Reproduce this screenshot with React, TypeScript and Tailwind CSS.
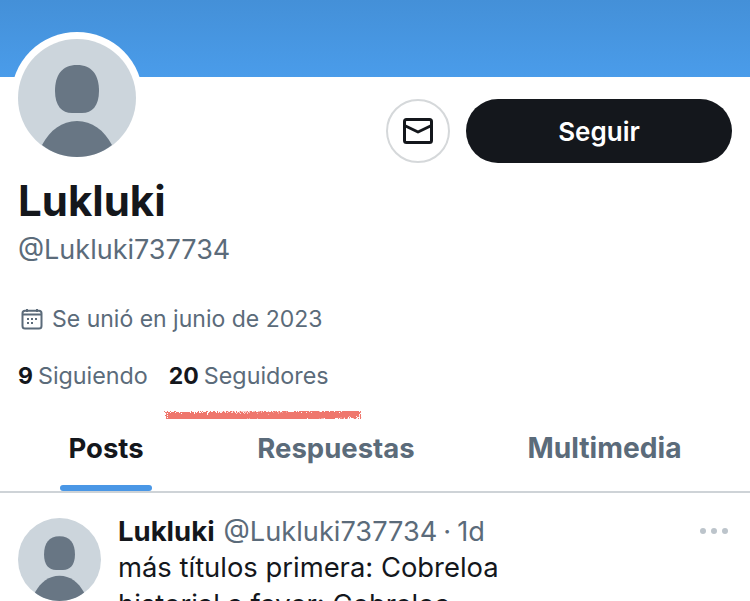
const DefaultAvatar = ({ className }: { className: string }) => (
  <svg viewBox="0 0 118 118" className={className}>
    <circle cx="59" cy="59" r="59" fill="#ccd5dc" />
    <path d="M59 26c15 0 22 10 22 26 0 15-7 22-17 22H54c-10 0-17-7-17-22 0-16 7-26 22-26z" fill="#687684" />
    <path d="M24 106c8-15 20-24 35-24s27 9 35 24C84 114 72 118 59 118S34 114 24 106z" fill="#687684" />
  </svg>
)

const MailIcon = () => (
  <svg viewBox="0 0 30 26" className="w-[30px] h-[26px]" fill="none" stroke="#14171c" strokeWidth="3" strokeLinejoin="round">
    <rect x="1.5" y="1.5" width="27" height="23" rx="2" />
    <path d="M1.5 7.5l13.5 6.5 13.5-6.5" />
  </svg>
)

const CalendarIcon = () => (
  <svg viewBox="0 0 22 22" className="w-[22px] h-[22px]" fill="none" stroke="#5b6b7a" strokeWidth="2">
    <rect x="1.5" y="2.8" width="19" height="17.7" rx="2.5" />
    <path d="M1.5 6.5h19M6 1v3M16 1v3" />
    <path d="M6 11h2M10 11h2M14 11h2M6 15h2M10 15h2" strokeWidth="2" />
  </svg>
)

const Scribble = () => (
  <svg viewBox="0 0 200 20" className="w-[200px] h-5 ml-[163px] mt-[14px]">
    <defs>
      <filter id="rough" x="-5%" y="-50%" width="110%" height="200%">
        <feTurbulence type="fractalNoise" baseFrequency="1.1" numOctaves="3" seed="4" />
        <feDisplacementMap in="SourceGraphic" scale="8" />
      </filter>
    </defs>
    <path d="M3 10.5C40 11 70 10 100 10S170 9 197 7.5" stroke="#ec5f54" strokeOpacity="0.85" strokeWidth="9" fill="none" filter="url(#rough)" />
  </svg>
)

const Stat = ({ value, label }: { value: string; label: string }) => (
  <div className="flex gap-[5px]">
    <b className="font-bold text-[23px] text-[#14171c]">{value}</b>
    <span>{label}</span>
  </div>
)

export default function App() {
  return (
    <div className="w-[750px] h-[601px] overflow-hidden bg-white text-[#14171c] font-['Inter',sans-serif]">
      <div className="h-[77px] bg-gradient-to-b from-[#4490d8] to-[#4a9cea]" />

      <div className="flex items-end justify-between -mt-[45px] pl-[11px] pr-[18px]">
        <div className="w-[132px] h-[132px] rounded-full bg-white p-[7px]">
          <DefaultAvatar className="w-[118px] h-[118px]" />
        </div>
        <div className="flex gap-4 mb-px">
          <div className="w-16 h-16 rounded-full border-2 border-[#d5d8da] flex items-center justify-center">
            <MailIcon />
          </div>
          <div className="w-[266px] h-16 rounded-full bg-[#14171c] flex items-center justify-center text-white text-[26px] font-semibold">
            Seguir
          </div>
        </div>
      </div>

      <div className="px-[18px]">
        <div className="mt-[13px] text-[42px] leading-[48px] font-bold">Lukluki</div>
        <div className="mt-[9px] text-[27px] leading-[32px] text-[#5b6b7a]">@Lukluki737734</div>
        <div className="mt-[37px] h-8 flex items-center text-[23px] text-[#5b6b7a]">
          <span className="ml-[3px] mr-[9px]"><CalendarIcon /></span>
          Se unió en junio de 2023
        </div>
        <div className="mt-[25px] flex gap-[21px] text-[23.3px] leading-8 text-[#5b6b7a]">
          <Stat value="9" label="Siguiendo" />
          <Stat value="20" label="Seguidores" />
        </div>
      </div>

      <Scribble />

      <div className="mt-[4px] h-[63px] border-b-2 border-[#ced3d7] flex text-[27.5px] font-bold text-[#5b6b7a]">
        <div className="w-[212px] flex flex-col items-center text-[#14171c]">
          <div className="h-[50px] leading-[37px]">Posts</div>
          <div className="mt-auto w-[92px] h-[6px] rounded-full bg-[#4a97e6]" />
        </div>
        <div className="w-[248px] h-[50px] leading-[37px] text-center">Respuestas</div>
        <div className="w-[290px] h-[50px] leading-[37px] text-center pr-px text-[28.2px]">Multimedia</div>
      </div>

      <div className="flex pt-[25px] pl-[18px] pr-[22px]">
        <DefaultAvatar className="w-[83px] h-[83px] shrink-0" />
        <div className="ml-[17px] flex-1">
          <div className="flex items-start justify-between">
            <div className="flex items-baseline text-[27.2px] leading-[26px] text-[#5b6b7a]">
              <b className="text-[27.5px] font-bold text-[#14171c]">Lukluki</b>
              <span className="ml-[9px]">@Lukluki737734</span>
              <span className="ml-[6px]">·</span>
              <span className="ml-[6px]">1d</span>
            </div>
            <svg viewBox="0 0 28 6" className="w-7 h-[6px] mt-[10px]" fill="#bcc4cb">
              <circle cx="3" cy="3" r="3" /><circle cx="14" cy="3" r="3" /><circle cx="25" cy="3" r="3" />
            </svg>
          </div>
          <div className="mt-[4px] text-[27.4px] leading-[37px]">
            <div>más títulos primera: Cobreloa</div>
            <div>historial a favor: Cobreloa</div>
          </div>
        </div>
      </div>
    </div>
  )
}
